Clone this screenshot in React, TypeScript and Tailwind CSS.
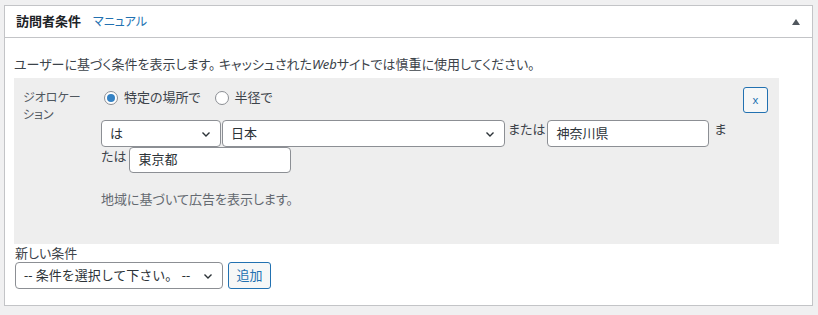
import React from 'react';

function Chevron() {
  return (
    <svg width="12" height="12" viewBox="0 0 12 12" className="shrink-0">
      <path d="M2.5 4.5 L6 8 L9.5 4.5" fill="none" stroke="#2c3338" strokeWidth="1.4" />
    </svg>
  );
}

function FakeSelect({ value, className }: { value: string; className: string }) {
  return (
    <div className={`flex items-center justify-between rounded-[4px] border border-[#8c8f94] bg-white pl-[8px] pr-[8px] text-[13px] text-[#2c3338] ${className}`}>
      <span className="[font-feature-settings:normal]">{value}</span>
      <Chevron />
    </div>
  );
}

function Radio({ checked, label }: { checked?: boolean; label: string }) {
  return (
    <label className="flex items-center gap-[6px]">
      <span className="flex h-[14px] w-[14px] items-center justify-center rounded-full border border-[#8c8f94] bg-white">
        {checked && <span className="h-[8px] w-[8px] rounded-full bg-[#3582c4]" />}
      </span>
      <span>{label}</span>
    </label>
  );
}

export default function App() {
  return (
    <div className="min-h-screen bg-[#f0f0f1] pl-[4px] pt-[5px] font-['Noto_Sans','Noto_Sans_CJK_JP',sans-serif] text-[13px] text-[#3c434a] [font-feature-settings:'palt']">
      <div className="w-[809px] border border-[#c3c4c7] bg-white">
        {/* Header */}
        <div className="flex h-[32px] items-center justify-between border-b border-[#c3c4c7] pl-[11px] pr-[12px]">
          <div className="flex items-baseline gap-[12px]">
            <span className="text-[13px] font-bold text-[#1d2327]">訪問者条件</span>
            <span className="text-[12px] text-[#2271b1]">マニュアル</span>
          </div>
          <svg width="8" height="6" viewBox="0 0 8 6">
            <path d="M4 0 L8 6 L0 6 Z" fill="#50575e" />
          </svg>
        </div>

        {/* Body */}
        <div className="pl-[9px] pt-[17px] pb-[16px]">
          <p className="leading-[19px]">
            ユーザーに基づく条件を表示します。 キャッシュされた<i>Web</i>サイトでは慎重に使用してください。
          </p>

          <div className="mt-[4px] flex h-[166px] w-[765px] bg-[#eeeeee] pl-[9px] pt-[10px]">
            <div className="w-[78px] pt-[1px] text-[12px] leading-[17px] text-[#50575e]">
              ジオロケー<br />ション
            </div>
            <div className="flex-1">
              <div className="flex h-[20px] items-center gap-[14px] pl-[3px]">
                <Radio checked label="特定の場所で" />
                <Radio label="半径で" />
              </div>
              <div className="mt-[12px] flex items-start">
                <FakeSelect value="は" className="h-[27px] w-[120px]" />
                <FakeSelect value="日本" className="ml-[1px] h-[27px] w-[283px]" />
                <span className="ml-[3px] leading-[19px]">または</span>
                <div className="ml-[2px] flex h-[27px] w-[162px] items-center rounded-[4px] border border-[#8c8f94] bg-white pl-[8px] text-[#2c3338]">
                  神奈川県
                </div>
                <span className="ml-[5px] leading-[19px]">ま</span>
              </div>
              <div className="flex items-start">
                <span className="leading-[19px]">たは</span>
                <div className="ml-[3px] flex h-[26px] w-[162px] items-center rounded-[4px] border border-[#8c8f94] bg-white pl-[8px] text-[#2c3338]">
                  東京都
                </div>
              </div>
              <p className="mt-[17px] leading-[19px] text-[#646970]">地域に基づいて広告を表示します。</p>
            </div>
            <div className="pr-[11px]">
              <button className="-mt-[1px] flex h-[26px] w-[25px] items-center justify-center rounded-[3px] border border-[#2271b1] bg-[#f6f7f7] text-[11px] text-[#2271b1]">
                x
              </button>
            </div>
          </div>

          <div className="pl-[1px]">
            <div className="leading-[17px] pt-[1px]">新しい条件</div>
            <div className="flex gap-[5px]">
              <FakeSelect value="-- 条件を選択して下さい。 --" className="h-[27px] w-[208px]" />
              <button className="flex h-[27px] w-[43px] items-center justify-center rounded-[3px] border border-[#2271b1] bg-[#f6f7f7] text-[13px] text-[#2271b1]">
                追加
              </button>
            </div>
          </div>
        </div>
      </div>
    </div>
  );
}
